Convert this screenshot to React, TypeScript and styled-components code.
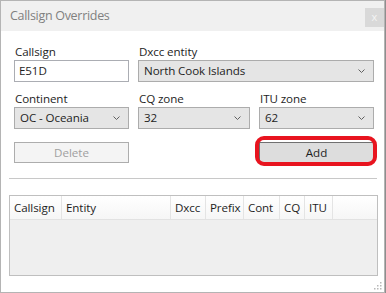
import React from "react";
import styled, { createGlobalStyle } from "styled-components";

const Global = createGlobalStyle`
  html, body { margin: 0; padding: 0; }
  body {
    background: #8e8e8e;
    width: 386px;
    height: 293px;
    overflow: hidden;
    font-family: "Open Sans", "Noto Sans", sans-serif;
  }
`;

const Window = styled.div`
  position: relative;
  box-sizing: border-box;
  width: 385px;
  height: 293px;
  border: 1px solid #b4b4b4;
  background: #ffffff;
  display: flex;
  flex-direction: column;
`;

const TitleBar = styled.div`
  height: 30px;
  background: #f0f0f0;
  display: flex;
  align-items: flex-start;
  justify-content: space-between;
  padding-left: 9px;
`;

const Title = styled.div`
  margin-top: 6px;
  font-size: 12.5px;
  color: #808080;
  letter-spacing: -0.3px;
`;

const Close = styled.div`
  margin-top: 7px;
  width: 19px;
  height: 19px;
  background: #d9d9d9;
  color: #f4f4f4;
  font-size: 11px;
  line-height: 17px;
  text-align: center;
`;

const Body = styled.div`
  flex: 1;
  display: flex;
  flex-direction: column;
  padding: 13px 6px 0 8px;
`;

const Form = styled.div`
  display: grid;
  grid-template-columns: 115px 112px 115px;
  column-gap: 9px;
  row-gap: 9px;
  padding: 0 0 0 5px;
`;

const Field = styled.div<{ $span?: number }>`
  display: flex;
  flex-direction: column;
  grid-column: span ${(p) => p.$span ?? 1};
`;

const Label = styled.div`
  font-size: 11.6px;
  line-height: 16px;
  color: #1e1e1e;
  padding-left: 1px;
  letter-spacing: -0.1px;
`;

const Input = styled.div`
  box-sizing: border-box;
  height: 22px;
  border: 1px solid #abadb3;
  background: #ffffff;
  font-size: 11.6px;
  line-height: 20px;
  padding-left: 4px;
  color: #1e1e1e;
  letter-spacing: -0.1px;
`;

const Select = styled.div`
  box-sizing: border-box;
  height: 22px;
  border: 1px solid #acacac;
  background: #e5e5e5;
  font-size: 11.6px;
  line-height: 20px;
  padding: 0 8px 0 5px;
  color: #1e1e1e;
  letter-spacing: -0.1px;
  display: flex;
  align-items: center;
  justify-content: space-between;
`;

const Buttons = styled.div`
  display: grid;
  grid-template-columns: 115px 112px 115px;
  column-gap: 9px;
  padding: 13px 0 0 5px;
`;

const Button = styled.div<{ $disabled?: boolean }>`
  position: relative;
  box-sizing: border-box;
  height: 21px;
  border: 1px solid ${(p) => (p.$disabled ? "#adadad" : "#707070")};
  background: ${(p) => (p.$disabled ? "#f4f4f4" : "#dddddd")};
  color: ${(p) => (p.$disabled ? "#a0a0a0" : "#1e1e1e")};
  font-size: 11.6px;
  line-height: 19px;
  text-align: center;
`;

const Highlight = styled.div`
  position: absolute;
  left: -5px;
  right: -4px;
  top: -7px;
  bottom: -4px;
  border: 4px solid #e8141f;
  border-radius: 9px;
  pointer-events: none;
`;

const Separator = styled.div`
  margin-top: 15px;
  height: 1px;
  background: #c8c8c8;
  margin-right: 1px;
`;

const Table = styled.div`
  margin-top: 16px;
  box-sizing: border-box;
  height: 81px;
  border: 1px solid #bfbfbf;
  background: #efefef;
  display: flex;
  flex-direction: column;
`;

const HeaderRow = styled.div`
  display: flex;
  height: 23px;
  background: linear-gradient(#ffffff, #f6f6f6);
  border-bottom: 1px solid #e2e2e2;
`;

const HeaderCell = styled.div<{ $w: number }>`
  box-sizing: border-box;
  width: ${(p) => p.$w}px;
  border-right: 1px solid #e4e4e4;
  font-size: 11.6px;
  line-height: 23px;
  padding-left: 4px;
  color: #1e1e1e;
  letter-spacing: -0.1px;
  white-space: nowrap;
  overflow: hidden;
`;

const Grip = styled.svg`
  position: absolute;
  right: 2px;
  bottom: 2px;
`;

const Chevron = () => (
  <svg width="7" height="4" viewBox="0 0 7 4">
    <path d="M0.5 0.5 L3.5 3.5 L6.5 0.5" fill="none" stroke="#606060" strokeWidth="1" />
  </svg>
);

const columns: [string, number][] = [
  ["Callsign", 52],
  ["Entity", 109],
  ["Dxcc", 35],
  ["Prefix", 38],
  ["Cont", 36],
  ["CQ", 25],
  ["ITU", 28],
];

export default function App() {
  return (
    <>
      <Global />
      <Window>
        <TitleBar>
          <Title>Callsign Overrides</Title>
          <Close>x</Close>
        </TitleBar>
        <Body>
          <Form>
            <Field>
              <Label>Callsign</Label>
              <Input>E51D</Input>
            </Field>
            <Field $span={2}>
              <Label>Dxcc entity</Label>
              <Select>
                North Cook Islands
                <Chevron />
              </Select>
            </Field>
            <Field>
              <Label>Continent</Label>
              <Select>
                OC - Oceania
                <Chevron />
              </Select>
            </Field>
            <Field>
              <Label>CQ zone</Label>
              <Select>
                32
                <Chevron />
              </Select>
            </Field>
            <Field>
              <Label>ITU zone</Label>
              <Select>
                62
                <Chevron />
              </Select>
            </Field>
          </Form>
          <Buttons>
            <Button $disabled>Delete</Button>
            <div />
            <Button>
              Add
              <Highlight />
            </Button>
          </Buttons>
          <Separator />
          <Table>
            <HeaderRow>
              {columns.map(([name, w]) => (
                <HeaderCell key={name} $w={w}>
                  {name}
                </HeaderCell>
              ))}
            </HeaderRow>
          </Table>
        </Body>
        <Grip width="9" height="9" viewBox="0 0 9 9">
          {[
            [7, 1], [7, 4], [4, 4], [7, 7], [4, 7], [1, 7],
          ].map(([x, y]) => (
            <rect key={`${x}-${y}`} x={x} y={y} width="1.5" height="1.5" fill="#b8b8b8" />
          ))}
        </Grip>
      </Window>
    </>
  );
}
